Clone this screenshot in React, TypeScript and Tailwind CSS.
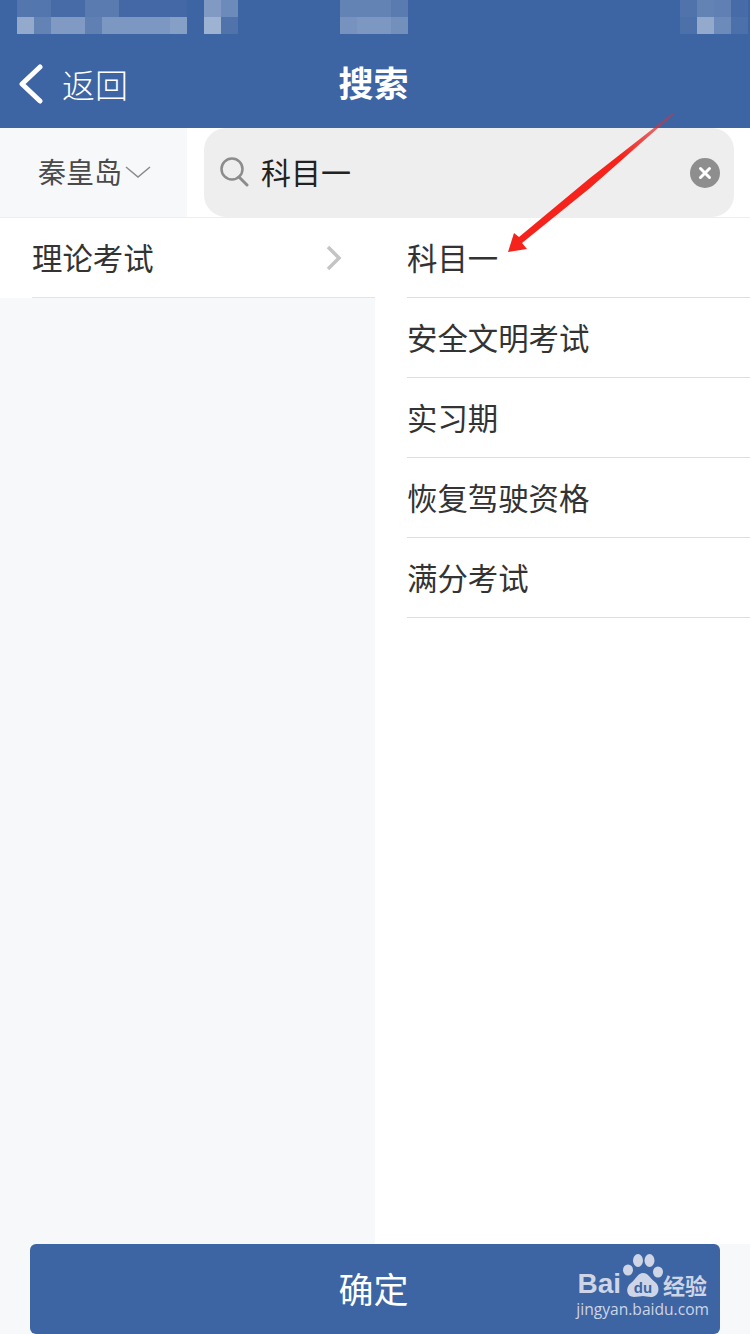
const font = { fontFamily: '"Noto Sans CJK SC", sans-serif' };

// mosaic blocks over the status bar, one [top, bottom] opacity pair per 17px column
const leftBlocks = [
  [0.12, 0.45], [0.12, 0.2], [0.05, 0.35], [0.05, 0.35], [0.15, 0.18], [0.15, 0.33], [0.03, 0.33], [0.03, 0.33], [0.03, 0.33], [0.03, 0.38],
];
const midBlocks = [
  [0.2, 0.3], [0.2, 0.33], [0.2, 0.33], [0.15, 0.28],
];
const clockBlocks = [
  [0.35, 0.5], [0.25, 0.1],
];
const rightBlocks = [
  [0.1, 0.08], [0.2, 0.45], [0.18, 0.25], [0.05, 0.08],
];

function Mosaic({ blocks }: { blocks: number[][] }) {
  return (
    <div className="flex">
      {blocks.map((b, i) => (
        <div key={i} className="w-[17px]">
          <div className="h-[17px] bg-white" style={{ opacity: b[0] }} />
          <div className="h-[17px] bg-white" style={{ opacity: b[1] }} />
        </div>
      ))}
    </div>
  );
}

function Header() {
  return (
    <div className="h-[128px] bg-[#3d64a3] text-white">
      <div className="flex h-[34px] pl-[17px]">
        <Mosaic blocks={leftBlocks} />
        <div className="w-[17px]" />
        <Mosaic blocks={clockBlocks} />
        <div className="w-[102px]" />
        <Mosaic blocks={midBlocks} />
        <div className="w-[272px]" />
        <Mosaic blocks={rightBlocks} />
      </div>
      <div className="relative flex h-[94px] items-center pl-[18px] pt-[6px]">
        <svg width="26" height="40" viewBox="0 0 26 40">
          <path d="M22 3 L4 20 L22 37" fill="none" stroke="white" strokeWidth="5" strokeLinecap="round" strokeLinejoin="round" />
        </svg>
        <span className="ml-[18px] text-[33px] leading-none font-light" style={font}>返回</span>
        <span className="absolute left-0 right-0 top-[30px] pr-[3px] text-center text-[35px] leading-none font-bold" style={font}>搜索</span>
      </div>
    </div>
  );
}

function SearchBar() {
  return (
    <div className="flex h-[90px] border-b border-[#eeeeee] bg-white">
      <div className="flex w-[187px] items-center bg-[#f7f8fa] pl-[38px]">
        <span className="pb-[4px] text-[28px] leading-none text-[#4a4a4a]" style={font}>秦皇岛</span>
        <svg width="27" height="12" viewBox="0 0 27 12" className="ml-[3px] -mt-[2px]">
          <path d="M1 1 L13 11 L25 1" fill="none" stroke="#8a8a8a" strokeWidth="1.5" />
        </svg>
      </div>
      <div className="ml-[17px] flex h-[89px] w-[530px] items-center rounded-[22px] bg-[#eeeeee] pl-[15px] pr-[14px]">
        <svg width="30" height="32" viewBox="0 0 30 32" className="-mt-[2px]">
          <circle cx="13" cy="13" r="10.5" fill="none" stroke="#8c8c8c" strokeWidth="2.5" />
          <path d="M20 21 L28 29" stroke="#8c8c8c" strokeWidth="3" strokeLinecap="round" />
        </svg>
        <span className="ml-[12px] pb-[3px] text-[30px] leading-none text-[#222222]" style={font}>科目一</span>
        <div className="ml-auto flex h-[30px] w-[30px] items-center justify-center rounded-full bg-[#8e8e8e]">
          <svg width="14" height="14" viewBox="0 0 14 14">
            <path d="M2.5 2.5 L11.5 11.5 M11.5 2.5 L2.5 11.5" stroke="white" strokeWidth="3" strokeLinecap="round" />
          </svg>
        </div>
      </div>
    </div>
  );
}

const subjects = ["科目一", "安全文明考试", "实习期", "恢复驾驶资格", "满分考试"];

export default function App() {
  return (
    <div className="relative flex h-[1334px] w-[750px] flex-col overflow-hidden bg-white" style={font}>
      <Header />
      <SearchBar />
      <div className="flex h-[1026px]">
        <div className="w-[375px] bg-[#f7f8fa]">
          <div className="h-[80px] bg-white pl-[32px]">
            <div className="flex h-[80px] items-center justify-between border-b border-[#e4e4e4] pr-[32px]">
              <span className="pb-[1px] text-[30.4px] leading-none text-[#333333]">理论考试</span>
              <svg width="18" height="28" viewBox="0 0 18 28">
                <path d="M3 3 L14 14 L3 25" fill="none" stroke="#c4c4c4" strokeWidth="3.5" />
              </svg>
            </div>
          </div>
        </div>
        <div className="flex-1 pl-[32px]">
          {subjects.map((s) => (
            <div key={s} className="flex h-[80px] items-center border-b border-[#dddddd]">
              <span className="pb-[1px] text-[30.4px] leading-none text-[#333333]">{s}</span>
            </div>
          ))}
        </div>
      </div>
      <div className="flex h-[90px] bg-[#f7f8fa] pl-[30px]">
        <div className="relative flex h-[90px] w-[690px] items-center justify-center rounded-[6px] bg-[#3d64a3]">
          <span className="mr-[3px] pb-[4px] text-[35px] leading-none text-white">确定</span>
          <div className="absolute right-[11px] top-[8px] flex flex-col items-end text-[#cdd5e6]">
            <div className="mr-[2px] flex items-center">
              <span className="mt-[16px] text-[28px] leading-none font-bold" style={{ fontFamily: '"Liberation Sans", sans-serif' }}>Bai</span>
              <svg width="44" height="48" viewBox="0 0 44 48">
                <ellipse cx="17" cy="8.5" rx="5" ry="6.5" fill="currentColor" />
                <ellipse cx="28.5" cy="8.5" rx="5" ry="6.5" fill="currentColor" />
                <ellipse cx="7" cy="18" rx="5" ry="5.5" fill="currentColor" />
                <ellipse cx="37" cy="20" rx="5" ry="5.5" fill="currentColor" />
                <path d="M22 21 C27 21 29 26 34 30 C40 35 38 45 30 45 C26 45 24 44 22 44 C20 44 17 45 13 45 C5 45 4 35 10 31 C15 27 17 21 22 21 Z" fill="currentColor" />
                <text x="22" y="41" textAnchor="middle" fontSize="15" fontWeight="bold" fill="#3d64a3" fontFamily="Liberation Sans">du</text>
              </svg>
              <span className="-ml-[2px] mt-[15px] text-[22px] leading-none font-bold">经验</span>
            </div>
            <span className="mt-[2px] text-[15.6px] leading-none" style={{ fontFamily: '"Open Sans", sans-serif' }}>jingyan.baidu.com</span>
          </div>
        </div>
      </div>
      {/* red annotation arrow drawn over the screenshot */}
      <svg width="750" height="1334" viewBox="0 0 750 1334" className="pointer-events-none absolute left-0 top-0">
        <defs>
          <linearGradient id="arrowFade" gradientUnits="userSpaceOnUse" x1="674" y1="112" x2="620" y2="155">
            <stop offset="0" stopColor="#d8333a" stopOpacity="0.55" />
            <stop offset="1" stopColor="#f5231c" />
          </linearGradient>
        </defs>
        <path d="M673 113 L590 178 L519 237 L514 233 L508 252 L527 249 L522 243 L590 188 L674 114 Z" fill="url(#arrowFade)" />
      </svg>
    </div>
  );
}
